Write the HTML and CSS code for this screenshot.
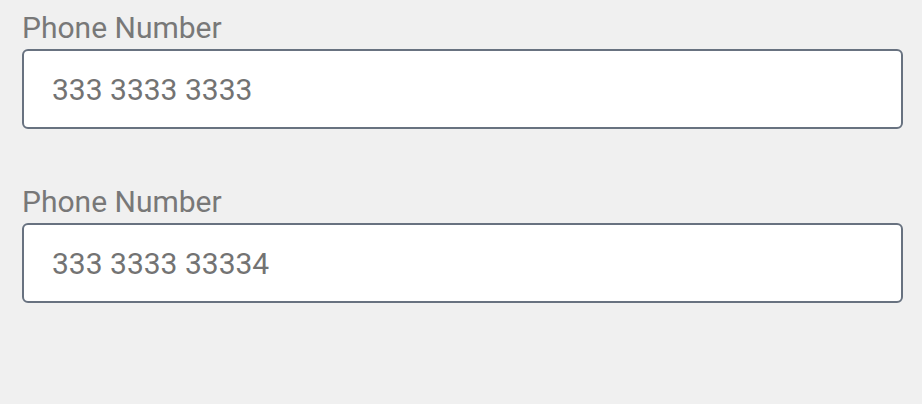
FILE: index.html
```html
<!DOCTYPE html>
<html>
<head>
<meta charset="utf-8">
<link rel="stylesheet" href="styles.css">
</head>
<body>
<form class="form">
  <div class="field">
    <label class="label" for="p1">Phone Number</label>
    <input class="input" id="p1" type="tel" value="333 3333 3333">
  </div>
  <div class="field">
    <label class="label" for="p2">Phone Number</label>
    <input class="input" id="p2" type="tel" value="333 3333 33334">
  </div>
</form>
</body>
</html>
```
FILE: styles.css
```css
html, body {
  margin: 0;
  padding: 0;
  background: #f0f0f0;
  font-family: Roboto, "Liberation Sans", sans-serif;
}
.form {
  display: flex;
  flex-direction: column;
  gap: 55px;
  padding: 10px 19px 0 22px;
}
.field {
  display: flex;
  flex-direction: column;
  gap: 3px;
}
.label {
  font-size: 30px;
  line-height: 36px;
  color: #787878;
}
.input {
  box-sizing: border-box;
  width: 100%;
  height: 80px;
  margin: 0;
  padding: 0 28px;
  border: 2px solid #687280;
  border-radius: 6px;
  background: #fff;
  font-family: Roboto, "Liberation Sans", sans-serif;
  font-size: 30px;
  color: #737373;
  outline: none;
}
```
